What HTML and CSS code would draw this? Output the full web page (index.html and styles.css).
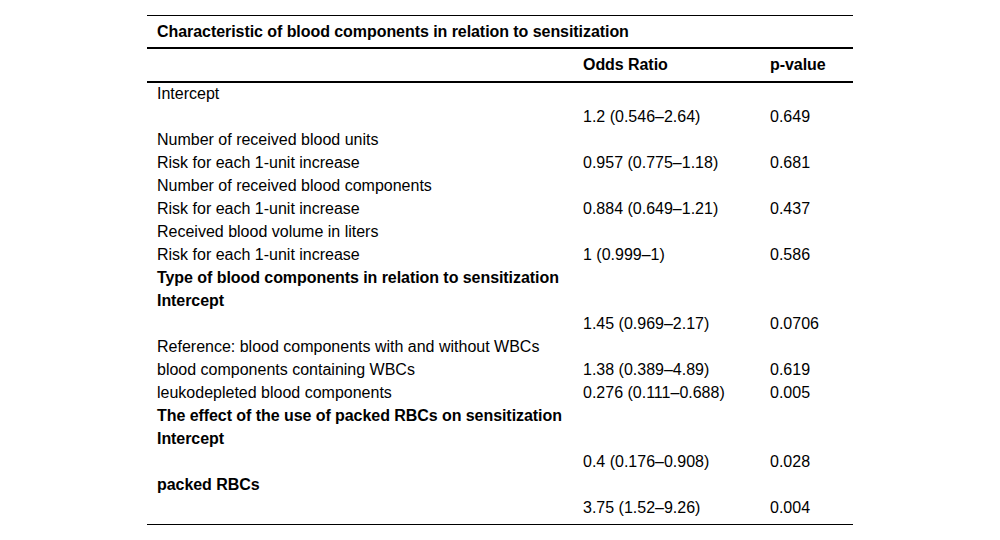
FILE: index.html
```html
<!DOCTYPE html>
<html>
<head>
<meta charset="utf-8">
<link rel="stylesheet" href="styles.css">
</head>
<body>
<table class="tbl">
  <thead>
    <tr class="title"><th colspan="3">Characteristic of blood components in relation to sensitization</th></tr>
    <tr class="head"><th class="c1"></th><th class="c2">Odds Ratio</th><th class="c3">p-value</th></tr>
  </thead>
  <tbody>
    <tr><td>Intercept</td><td></td><td></td></tr>
    <tr><td></td><td>1.2 (0.546–2.64)</td><td>0.649</td></tr>
    <tr><td>Number of received blood units</td><td></td><td></td></tr>
    <tr><td>Risk for each 1-unit increase</td><td>0.957 (0.775–1.18)</td><td>0.681</td></tr>
    <tr><td>Number of received blood components</td><td></td><td></td></tr>
    <tr><td>Risk for each 1-unit increase</td><td>0.884 (0.649–1.21)</td><td>0.437</td></tr>
    <tr><td>Received blood volume in liters</td><td></td><td></td></tr>
    <tr><td>Risk for each 1-unit increase</td><td>1 (0.999–1)</td><td>0.586</td></tr>
    <tr class="b"><td>Type of blood components in relation to sensitization</td><td></td><td></td></tr>
    <tr class="b"><td>Intercept</td><td></td><td></td></tr>
    <tr><td></td><td>1.45 (0.969–2.17)</td><td>0.0706</td></tr>
    <tr><td>Reference: blood components with and without WBCs</td><td></td><td></td></tr>
    <tr><td>blood components containing WBCs</td><td>1.38 (0.389–4.89)</td><td>0.619</td></tr>
    <tr><td>leukodepleted blood components</td><td>0.276 (0.111–0.688)</td><td>0.005</td></tr>
    <tr class="b"><td>The effect of the use of packed RBCs on sensitization</td><td></td><td></td></tr>
    <tr class="b"><td>Intercept</td><td></td><td></td></tr>
    <tr><td></td><td>0.4 (0.176–0.908)</td><td>0.028</td></tr>
    <tr class="b"><td>packed RBCs</td><td></td><td></td></tr>
    <tr class="last"><td></td><td>3.75 (1.52–9.26)</td><td>0.004</td></tr>
  </tbody>
</table>
</body>
</html>
```
FILE: styles.css
```css
html, body {
  margin: 0;
  padding: 0;
  background: #ffffff;
}
body {
  font-family: "Liberation Sans", Arial, sans-serif;
  font-size: 16px;
  color: #000;
}
.tbl {
  width: 706px;
  margin: 15px auto 0;
  border-collapse: collapse;
  border-spacing: 0;
  border-top: 1px solid #000;
  border-bottom: 1px solid #000;
}
.tbl th, .tbl td {
  text-align: left;
  padding: 0 0 2px 10px;
  white-space: nowrap;
  vertical-align: top;
}
.c1 { width: 416px; }
.c2 { width: 177px; }
.c3 { width: 83px; }
.tbl th {
  font-weight: bold;
  letter-spacing: -0.06px;
}
.title th {
  padding-top: 1px;
  padding-bottom: 1px;
  line-height: 29px;
  border-bottom: 2px solid #000;
}
.head th {
  padding-top: 1px;
  padding-bottom: 1px;
  line-height: 30px;
  border-bottom: 2px solid #000;
}
.tbl td {
  line-height: 21px;
}
.b td {
  font-weight: bold;
  letter-spacing: -0.06px;
}
.last td { padding-bottom: 6px; }
```
